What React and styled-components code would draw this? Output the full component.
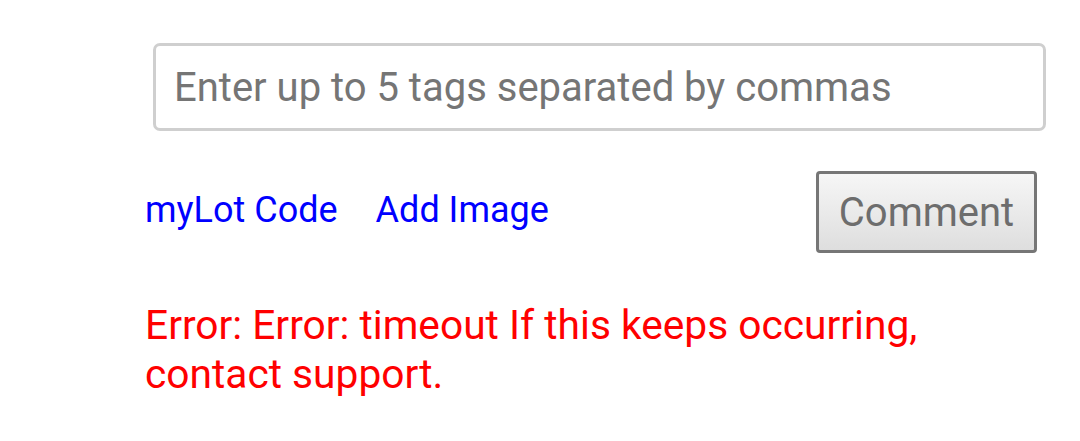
import React from 'react';
import styled, { createGlobalStyle } from 'styled-components';

const GlobalStyle = createGlobalStyle`
  body {
    margin: 0;
    background: #fff;
    font-family: Roboto, "Liberation Sans", sans-serif;
  }
`;

const Form = styled.div`
  box-sizing: border-box;
  width: 1080px;
  padding: 43px 34px 0 145px;
  display: flex;
  flex-direction: column;
`;

const TagInput = styled.input`
  box-sizing: border-box;
  margin-left: 8px;
  width: 893px;
  height: 88px;
  padding: 0 18px;
  border: 3px solid #cfcfcf;
  border-radius: 7px;
  font-family: Roboto, sans-serif;
  font-size: 40px;
  color: #333;
  outline: none;

  &::placeholder {
    color: #757575;
  }
`;

const Actions = styled.div`
  display: flex;
  align-items: center;
  margin-top: 40px;
  margin-right: 9px;
`;

const Links = styled.div`
  display: flex;
  gap: 38px;
  flex: 1;
  padding-bottom: 4px;
`;

const Link = styled.a`
  color: #0000ff;
  font-size: 36px;
  text-decoration: none;
  cursor: pointer;
`;

const CommentButton = styled.button`
  box-sizing: border-box;
  width: 221px;
  height: 82px;
  border: 3px solid #767676;
  border-radius: 4px;
  background: linear-gradient(#f6f6f6, #dedede);
  color: #6d6d6d;
  font-family: Roboto, sans-serif;
  font-size: 40px;
  padding: 0;
`;

const ErrorText = styled.div`
  margin-top: 48px;
  color: #ff0000;
  font-size: 40.7px;
  line-height: 49px;
  width: 880px;
`;

export default function App() {
  return (
    <>
      <GlobalStyle />
      <Form>
        <TagInput placeholder="Enter up to 5 tags separated by commas" />
        <Actions>
          <Links>
            <Link>myLot Code</Link>
            <Link>Add Image</Link>
          </Links>
          <CommentButton>Comment</CommentButton>
        </Actions>
        <ErrorText>Error: Error: timeout If this keeps occurring, contact support.</ErrorText>
      </Form>
    </>
  );
}
